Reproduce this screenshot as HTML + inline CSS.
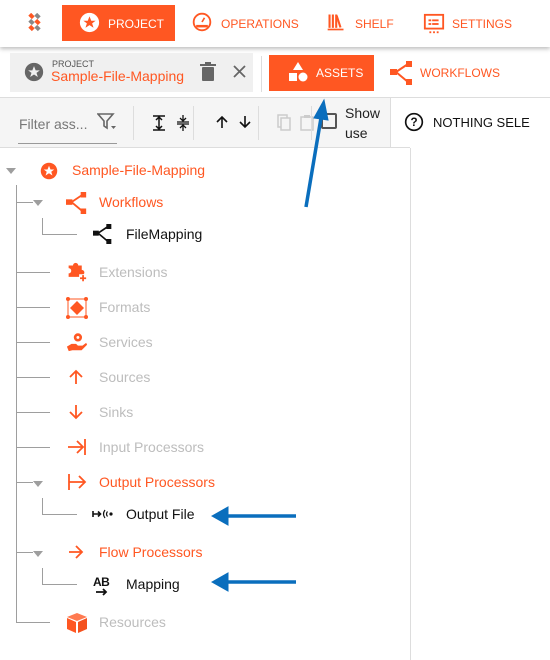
<!DOCTYPE html><html><head><style>
*{margin:0;padding:0;box-sizing:border-box}
body{width:550px;height:660px;overflow:hidden;background:#fff;font-family:"Liberation Sans",sans-serif;position:relative}
.a{position:absolute}
.o{color:#ff5722}.g{color:#bdbdbd}.k{color:#111}
.t{font-size:14px;position:absolute;white-space:nowrap}
.hl{position:absolute;height:1px;background:#9e9e9e}
.vl{position:absolute;width:1px;background:#9e9e9e}
.tri{position:absolute;width:0;height:0;border-left:5px solid transparent;border-right:5px solid transparent;border-top:6px solid #9e9e9e}
.h{font-size:12px;top:17px}
</style></head><body>
<div class="a" style="left:0;top:0;width:550px;height:47px;background:#fff;box-shadow:0 2px 4px rgba(0,0,0,.25);z-index:2">
<svg class="a" style="left:27px;top:13px" width="20" height="20" viewBox="0 0 20 20"><g fill="#ff5722"><rect x="2" y="1" width="5" height="4" transform="rotate(45 4.5 3)"/><rect x="2" y="13" width="5" height="4" transform="rotate(45 4.5 15)"/><rect x="8" y="7" width="5" height="4" transform="rotate(45 10.5 9)"/></g><g fill="#888"><rect x="8" y="1" width="5" height="4" transform="rotate(45 10.5 3)"/><rect x="2" y="7" width="5" height="4" transform="rotate(45 4.5 9)"/><rect x="8" y="13" width="5" height="4" transform="rotate(45 10.5 15)"/></g></svg>
<div class="a" style="left:62px;top:5px;width:113px;height:36px;background:#ff5722"></div>
<svg class="a" style="left:79px;top:12px" width="21" height="21" viewBox="0 0 24 24"><circle cx="12" cy="12" r="11" fill="#fff"/><path d="M12 5l2 5h5l-4 3 1.6 5L12 15l-4.6 3 1.6-5-4-3h5z" fill="#ff5722"/></svg>
<div class="t h" style="left:108px;color:#fff">PROJECT</div>
<svg class="a" style="left:192px;top:12px" width="20" height="20" viewBox="0 0 24 24"><circle cx="12" cy="12" r="10" fill="none" stroke="#ff5722" stroke-width="2.2"/><path d="M5 17h14" stroke="#ff5722" stroke-width="3"/><path d="M12 12l3-5" stroke="#ff5722" stroke-width="2"/></svg>
<div class="t o h" style="left:221px">OPERATIONS</div>
<svg class="a" style="left:326px;top:12px" width="20" height="20" viewBox="0 0 24 24"><g fill="#ff5722"><rect x="3" y="3" width="2.5" height="16"/><rect x="7" y="3" width="2.5" height="16"/><rect x="11" y="3" width="2.5" height="16"/><rect x="14" y="4" width="2.5" height="15" transform="rotate(-18 15 12)"/><rect x="2" y="20" width="19" height="2"/></g></svg>
<div class="t o h" style="left:355px">SHELF</div>
<svg class="a" style="left:423px;top:13px" width="22" height="22" viewBox="0 0 24 24"><rect x="2" y="2" width="20" height="15" fill="none" stroke="#ff5722" stroke-width="2"/><g fill="#ff5722"><rect x="6" y="7" width="3" height="2"/><rect x="10" y="7" width="7" height="2"/><rect x="6" y="11" width="3" height="2"/><rect x="10" y="11" width="7" height="2"/><rect x="7" y="20" width="2" height="2"/><rect x="11" y="20" width="2" height="2"/><rect x="15" y="20" width="2" height="2"/></g></svg>
<div class="t o h" style="left:452px">SETTINGS</div>
</div>
<div class="a" style="left:10px;top:53px;width:243px;height:39px;background:#f0f0f0"></div>
<svg class="a" style="left:24px;top:62px" width="20" height="20" viewBox="0 0 24 24"><circle cx="12" cy="12" r="11" fill="#666"/><path d="M12 5l2 5h5l-4 3 1.6 5L12 15l-4.6 3 1.6-5-4-3h5z" fill="#f0f0f0"/></svg>
<div class="t" style="left:52px;top:59px;font-size:9px;color:#555">PROJECT</div>
<div class="t o" style="left:51px;top:68px;font-size:14px">Sample-File-Mapping</div>
<svg class="a" style="left:200px;top:62px" width="16" height="19" viewBox="0 0 16 19"><rect x="2" y="5" width="12" height="14" rx="1" fill="#666"/><rect x="0" y="2" width="16" height="2" fill="#666"/><rect x="5" y="0" width="6" height="2" fill="#666"/></svg>
<svg class="a" style="left:233px;top:65px" width="13" height="13" viewBox="0 0 13 13"><path d="M1 1l11 11M12 1L1 12" stroke="#666" stroke-width="1.8"/></svg>
<div class="vl" style="left:261px;top:56px;height:36px;background:#ddd"></div>
<div class="a" style="left:269px;top:55px;width:105px;height:36px;background:#ff5722"></div>
<svg class="a" style="left:287px;top:61px" width="22" height="22" viewBox="0 0 22 22"><path d="M11 1l5 8H6z" fill="#fff"/><rect x="2" y="12" width="8" height="8" fill="#fff"/><circle cx="16" cy="16" r="4.5" fill="#fff"/></svg>
<div class="t" style="left:316px;top:66px;color:#fff;font-size:12px">ASSETS</div>
<svg class="a" style="left:390px;top:61px" width="24" height="24" viewBox="0 0 24 24"><rect x="0" y="8" width="7" height="6" fill="#ff5722"/><rect x="16" y="0" width="6" height="6" fill="#ff5722"/><rect x="16" y="18" width="6" height="6" fill="#ff5722"/><path d="M6 11L18 3M6 11l12 10" stroke="#ff5722" stroke-width="2"/></svg>
<div class="t o" style="left:420px;top:66px;font-size:12px">WORKFLOWS</div>
<div class="a" style="left:0;top:97px;width:550px;height:1px;background:#ddd"></div>
<div class="a" style="left:0;top:98px;width:390px;height:50px;background:#f5f5f5"></div>
<div class="a" style="left:0;top:147px;width:410px;height:1px;background:#ddd"></div>
<div class="vl" style="left:390px;top:98px;height:50px;background:#ddd"></div>
<div class="vl" style="left:410px;top:148px;height:512px;background:#ddd"></div>
<div class="t" style="left:19px;top:116px;color:#777">Filter ass...</div>
<div class="hl" style="left:18px;top:143px;width:99px;background:#999"></div>
<svg class="a" style="left:97px;top:113px" width="20" height="18" viewBox="0 0 20 18"><path d="M1 1h15l-6 7v7l-3-2V8z" fill="none" stroke="#666" stroke-width="1.6"/><path d="M14 13h5l-2.5 3z" fill="#666"/></svg>
<div class="vl" style="left:133px;top:106px;height:34px;background:#ddd"></div>
<svg class="a" style="left:153px;top:115px" width="12" height="16" viewBox="0 0 12 16"><path d="M0 1h12M0 15h12M6 3v10M3 5l3-3 3 3M3 11l3 3 3-3" stroke="#111" stroke-width="1.5" fill="none"/></svg>
<svg class="a" style="left:177px;top:115px" width="12" height="16" viewBox="0 0 12 16"><path d="M0 7h12M0 9h12M6 0v5M6 11v5M3 3l3 3 3-3M3 13l3-3 3 3" stroke="#111" stroke-width="1.3" fill="none"/></svg>
<div class="vl" style="left:193px;top:106px;height:34px;background:#ddd"></div>
<svg class="a" style="left:215px;top:115px" width="14" height="14" viewBox="0 0 14 14"><path d="M7 13V2M2 7l5-5 5 5" stroke="#111" stroke-width="1.6" fill="none"/></svg>
<svg class="a" style="left:238px;top:115px" width="14" height="14" viewBox="0 0 14 14"><path d="M7 1v11M2 7l5 5 5-5" stroke="#111" stroke-width="1.6" fill="none"/></svg>
<div class="vl" style="left:258px;top:106px;height:34px;background:#ddd"></div>
<svg class="a" style="left:277px;top:114px" width="15" height="18" viewBox="0 0 15 18"><rect x="1" y="1" width="9" height="12" fill="none" stroke="#ccc" stroke-width="1.5"/><rect x="4" y="4" width="9" height="12" fill="#f5f5f5" stroke="#ccc" stroke-width="1.5"/></svg>
<svg class="a" style="left:300px;top:114px" width="15" height="18" viewBox="0 0 15 18"><rect x="1" y="3" width="12" height="13" fill="none" stroke="#ccc" stroke-width="1.5"/><rect x="4" y="1" width="6" height="3" fill="#ccc"/></svg>
<div class="vl" style="left:311px;top:106px;height:34px;background:#ddd"></div>
<div class="a" style="left:321px;top:113px;width:16px;height:16px;border:2px solid #555;border-radius:2px"></div>
<div class="t" style="left:345px;top:103px;line-height:20px;color:#222">Show<br>use</div>
<svg class="a" style="left:404px;top:112px" width="20" height="20" viewBox="0 0 24 24"><circle cx="12" cy="12" r="10" fill="none" stroke="#111" stroke-width="2"/><text x="12" y="17" font-size="14" text-anchor="middle" font-family="Liberation Sans" font-weight="bold" fill="#111">?</text></svg>
<div class="t k" style="left:433px;top:115px;font-size:13px">NOTHING SELE</div>
<div class="tri" style="left:6px;top:168px"></div>
<svg class="a" style="left:40px;top:162px" width="18" height="18" viewBox="0 0 24 24"><circle cx="12" cy="12" r="11" fill="#ff5722"/><path d="M12 5l2 5h5l-4 3 1.6 5L12 15l-4.6 3 1.6-5-4-3h5z" fill="#fff"/></svg>
<div class="t o" style="left:72px;top:162px">Sample-File-Mapping</div>
<div class="vl" style="left:16px;top:185px;height:438px"></div>
<div class="hl" style="left:16px;top:202px;width:17px"></div>
<div class="tri" style="left:33px;top:200px"></div>
<svg class="a" style="left:66px;top:192px" width="22" height="22" viewBox="0 0 24 24"><rect x="0" y="8" width="7" height="6" fill="#ff5722"/><rect x="16" y="0" width="6" height="6" fill="#ff5722"/><rect x="16" y="18" width="6" height="6" fill="#ff5722"/><path d="M6 11L18 3M6 11l12 10" stroke="#ff5722" stroke-width="2"/></svg>
<div class="t o" style="left:99px;top:194px">Workflows</div>
<div class="vl" style="left:42px;top:218px;height:17px"></div>
<div class="hl" style="left:42px;top:234px;width:35px"></div>
<svg class="a" style="left:93px;top:224px" width="20" height="20" viewBox="0 0 24 24"><rect x="0" y="8" width="7" height="6" fill="#111"/><rect x="16" y="0" width="6" height="6" fill="#111"/><rect x="16" y="18" width="6" height="6" fill="#111"/><path d="M6 11L18 3M6 11l12 10" stroke="#111" stroke-width="2"/></svg>
<div class="t k" style="left:126px;top:226px">FileMapping</div>
<div class="hl" style="left:16px;top:272px;width:34px"></div>
<svg class="a" style="left:66px;top:262px" width="21" height="21" viewBox="0 0 24 24"><path d="M3 4h5a3 3 0 016 0h4v5a3 3 0 010 6v2H3v-4a3 3 0 000-6z" fill="#ff5722"/><rect x="15" y="14" width="9" height="9" fill="#fff"/><path d="M19.5 15v7M16 18.5h7" stroke="#ff5722" stroke-width="2"/></svg>
<div class="t g" style="left:99px;top:264px">Extensions</div>
<div class="hl" style="left:16px;top:307px;width:34px"></div>
<svg class="a" style="left:66px;top:297px" width="22" height="22" viewBox="0 0 22 22"><rect x="2" y="2" width="18" height="18" fill="none" stroke="#ff5722" stroke-width="1"/><g fill="#ff5722"><circle cx="2" cy="2" r="2"/><circle cx="20" cy="2" r="2"/><circle cx="2" cy="20" r="2"/><circle cx="20" cy="20" r="2"/><path d="M11 4l7 7-7 7-7-7z"/></g></svg>
<div class="t g" style="left:99px;top:299px">Formats</div>
<div class="hl" style="left:16px;top:342px;width:34px"></div>
<svg class="a" style="left:66px;top:331px" width="22" height="22" viewBox="0 0 24 24"><circle cx="13" cy="7" r="4.5" fill="#ff5722"/><circle cx="13" cy="7" r="1.6" fill="#fff"/><path d="M1 17l5-3h5l2 2h5l4-3 1 2-6 6H7l-4 1z" fill="#ff5722"/></svg>
<div class="t g" style="left:99px;top:334px">Services</div>
<div class="hl" style="left:16px;top:377px;width:34px"></div>
<svg class="a" style="left:68px;top:369px" width="16" height="16" viewBox="0 0 16 16"><path d="M8 15V2M2 8l6-6 6 6" stroke="#ff5722" stroke-width="1.8" fill="none"/></svg>
<div class="t g" style="left:99px;top:369px">Sources</div>
<div class="hl" style="left:16px;top:412px;width:34px"></div>
<svg class="a" style="left:68px;top:404px" width="16" height="16" viewBox="0 0 16 16"><path d="M8 1v13M2 8l6 6 6-6" stroke="#ff5722" stroke-width="1.8" fill="none"/></svg>
<div class="t g" style="left:99px;top:404px">Sinks</div>
<div class="hl" style="left:16px;top:447px;width:34px"></div>
<svg class="a" style="left:67px;top:438px" width="20" height="18" viewBox="0 0 20 18"><path d="M1 9h14M10 3l6 6-6 6M18 1v16" stroke="#ff5722" stroke-width="1.8" fill="none"/></svg>
<div class="t g" style="left:99px;top:439px">Input Processors</div>
<div class="hl" style="left:16px;top:482px;width:17px"></div>
<div class="tri" style="left:33px;top:481px"></div>
<svg class="a" style="left:67px;top:473px" width="20" height="18" viewBox="0 0 20 18"><path d="M2 1v16M2 9h15M12 3l6 6-6 6" stroke="#ff5722" stroke-width="1.8" fill="none"/></svg>
<div class="t o" style="left:99px;top:474px">Output Processors</div>
<div class="vl" style="left:42px;top:498px;height:17px"></div>
<div class="hl" style="left:42px;top:514px;width:35px"></div>
<svg class="a" style="left:92px;top:509px" width="22" height="10" viewBox="0 0 22 10"><path d="M1 2v6M1 5h7M6 2.5l2.5 2.5L6 7.5" stroke="#111" stroke-width="1.6" fill="none"/><path d="M13 1q-3 4 0 8M15.5 2.5q-2 2.5 0 5" stroke="#111" stroke-width="1.2" fill="none"/><circle cx="19" cy="5" r="1.6" fill="#111"/></svg>
<div class="t k" style="left:126px;top:506px">Output File</div>
<div class="hl" style="left:16px;top:552px;width:17px"></div>
<div class="tri" style="left:33px;top:551px"></div>
<svg class="a" style="left:68px;top:545px" width="16" height="14" viewBox="0 0 16 14"><path d="M1 7h13M8 1l6 6-6 6" stroke="#ff5722" stroke-width="1.8" fill="none"/></svg>
<div class="t o" style="left:99px;top:544px">Flow Processors</div>
<div class="vl" style="left:42px;top:568px;height:17px"></div>
<div class="hl" style="left:42px;top:584px;width:35px"></div>
<div class="t k" style="left:93px;top:575px;font-size:12px;font-weight:bold;letter-spacing:-0.5px">AB</div>
<svg class="a" style="left:96px;top:588px" width="12" height="8" viewBox="0 0 12 8"><path d="M0 4h10M7 1l3 3-3 3" stroke="#111" stroke-width="1.8" fill="none"/></svg>
<div class="t k" style="left:126px;top:576px">Mapping</div>
<div class="hl" style="left:16px;top:622px;width:34px"></div>
<svg class="a" style="left:66px;top:612px" width="22" height="22" viewBox="0 0 22 22"><path d="M11 1l10 4-10 4L1 5z" fill="#ff7a50"/><path d="M1 6l9 4v11l-9-4z" fill="#ff5722"/><path d="M21 6l-9 4v11l9-4z" fill="#f4511e"/></svg>
<div class="t g" style="left:99px;top:614px">Resources</div>
<svg class="a" style="left:0;top:0" width="550" height="660"><g fill="#0a6ebd" stroke="#0a6ebd"><path d="M306 207L322 112" stroke-width="3.5"/><path d="M324 100l-10 18 14 2z"/><path d="M296 516H226" stroke-width="3.5"/><path d="M212 516l16-9v18z"/><path d="M296 582H226" stroke-width="3.5"/><path d="M212 582l16-9v18z"/></g></svg>
</body></html>
